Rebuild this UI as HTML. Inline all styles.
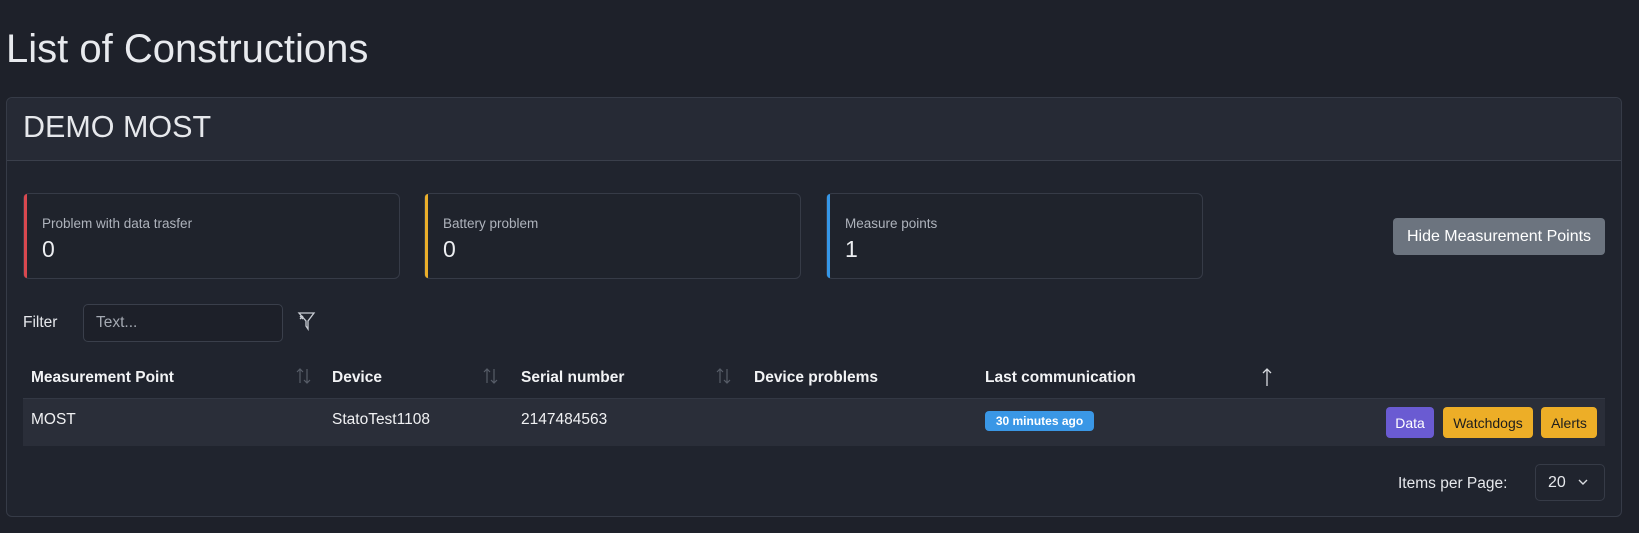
<!DOCTYPE html>
<html><head><meta charset="utf-8"><style>
*{box-sizing:border-box;margin:0;padding:0}
body{width:1639px;height:533px;background:#1e212a;font-family:"Liberation Sans",sans-serif;color:#e6e8ec;position:relative;overflow:hidden}
.a{position:absolute;white-space:nowrap}
h1{position:absolute;left:6px;top:27px;font-size:40px;font-weight:400;color:#e8eaee}
.card{position:absolute;left:6px;top:97px;width:1616px;height:420px;border:1px solid #363b47;border-radius:6px;background:#20242e}
.chead{position:absolute;left:0;top:0;width:100%;height:63px;background:#262a35;border-bottom:1px solid #3a3f4b;border-radius:6px 6px 0 0}
.stat{position:absolute;top:193px;width:377px;height:86px;border:1px solid #363b47;border-radius:6px;background:#1f232c}
.stat .l{position:absolute;left:0;top:0;width:3px;height:100%;border-radius:6px 0 0 6px}
.stat .t{position:absolute;left:18px;top:22px;font-size:13.5px;color:#aeb3bc}
.stat .n{position:absolute;left:18px;top:42px;font-size:23px;color:#eceef1}
.btn{position:absolute;border-radius:4px;font-size:14px;display:flex;align-items:center;justify-content:center}
.th{position:absolute;top:369px;font-size:15.5px;font-weight:700;color:#f2f3f5}
.td{position:absolute;top:411px;font-size:15.5px;color:#f0f1f3}
</style></head><body>
<h1>List of Constructions</h1>
<div class="card"><div class="chead"></div></div>
<div class="a" style="left:23px;top:110px;font-size:30.5px;color:#e6e8ec">DEMO MOST</div>

<div class="stat" style="left:23px"><div class="l" style="background:#d9484f"></div><div class="t">Problem with data trasfer</div><div class="n">0</div></div>
<div class="stat" style="left:424px"><div class="l" style="background:#eaae2a"></div><div class="t">Battery problem</div><div class="n">0</div></div>
<div class="stat" style="left:826px"><div class="l" style="background:#3597e8"></div><div class="t">Measure points</div><div class="n">1</div></div>
<div class="btn" style="left:1393px;top:218px;width:212px;height:37px;background:#6c747f;color:#fff;font-size:16px">Hide Measurement Points</div>

<div class="a" style="left:23px;top:314px;font-size:15.5px">Filter</div>
<div class="a" style="left:83px;top:304px;width:200px;height:38px;border:1px solid #3a3f4b;border-radius:5px;background:#1d2029"></div>
<div class="a" style="left:96px;top:314px;font-size:15.5px;color:#a4a9b2">Text...</div>
<svg class="a" style="left:297px;top:311px" width="20" height="20" viewBox="0 0 20 20" fill="none" stroke="#c8ccd3" stroke-width="1.3"><path d="M2 2h15l-6 8v8l-2-3v-5z"/><path d="M3 5l3 3M6 5l-3 3"/></svg>

<div class="th" style="left:31px">Measurement Point</div>
<div class="th" style="left:332px">Device</div>
<div class="th" style="left:521px">Serial number</div>
<div class="th" style="left:754px">Device problems</div>
<div class="th" style="left:985px">Last communication</div>
<svg class="a" style="left:296px;top:367px" width="16" height="18" viewBox="0 0 16 18" fill="none" stroke="#575d68" stroke-width="1.2"><path d="M4 16V2M1 5l3-3 3 3M11 2v14M8 13l3 3 3-3"/></svg>
<svg class="a" style="left:483px;top:367px" width="16" height="18" viewBox="0 0 16 18" fill="none" stroke="#575d68" stroke-width="1.2"><path d="M4 16V2M1 5l3-3 3 3M11 2v14M8 13l3 3 3-3"/></svg>
<svg class="a" style="left:716px;top:367px" width="16" height="18" viewBox="0 0 16 18" fill="none" stroke="#575d68" stroke-width="1.2"><path d="M4 16V2M1 5l3-3 3 3M11 2v14M8 13l3 3 3-3"/></svg>
<svg class="a" style="left:1260px;top:367px" width="14" height="20" viewBox="0 0 14 20" fill="none" stroke="#d8dbe0" stroke-width="1.3"><path d="M7 19V2M3 6l4-4 4 4"/></svg>

<div class="a" style="left:23px;top:398px;width:1582px;height:48px;background:#2a2e39;border-top:1px solid #333844"></div>
<div class="td" style="left:31px">MOST</div>
<div class="td" style="left:332px">StatoTest1108</div>
<div class="td" style="left:521px">2147484563</div>
<div class="btn" style="left:985px;top:411px;width:109px;height:20px;background:#3a97e6;color:#fff;font-size:12px;font-weight:700;border-radius:4px">30 minutes ago</div>
<div class="btn" style="left:1386px;top:407px;width:48px;height:31px;background:#6a5bd2;color:#fff">Data</div>
<div class="btn" style="left:1443px;top:407px;width:90px;height:31px;background:#edae27;color:#1d1d1d">Watchdogs</div>
<div class="btn" style="left:1541px;top:407px;width:56px;height:31px;background:#edae27;color:#1d1d1d">Alerts</div>

<div class="a" style="left:1398px;top:475px;font-size:15.5px">Items per Page:</div>
<div class="a" style="left:1535px;top:464px;width:70px;height:37px;border:1px solid #363b47;border-radius:5px"></div>
<div class="a" style="left:1548px;top:474px;font-size:16px">20</div>
<svg class="a" style="left:1578px;top:478px" width="10" height="8" viewBox="0 0 10 8" fill="none" stroke="#d8dbe0" stroke-width="1.4"><path d="M1 2l4 4 4-4"/></svg>
</body></html>
